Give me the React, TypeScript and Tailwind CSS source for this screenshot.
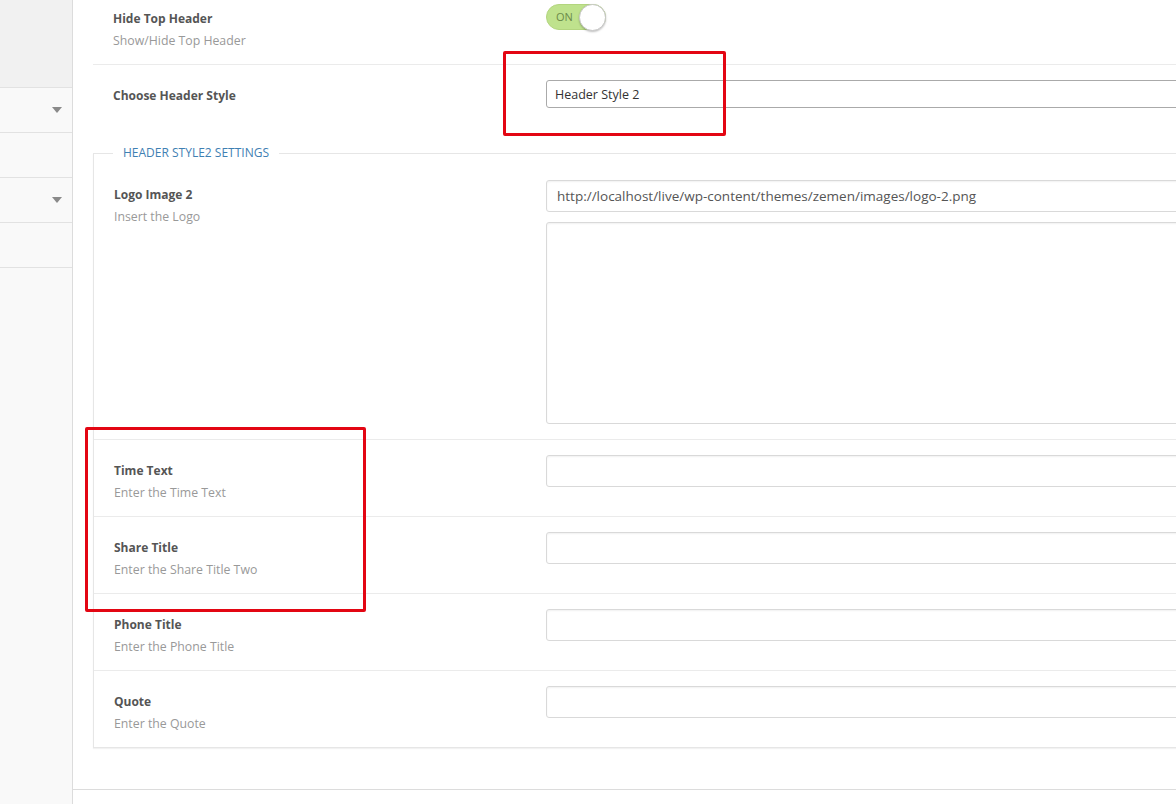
import React from 'react';

const font = { fontFamily: '"Open Sans", "Noto Sans", Arial, sans-serif' };

const SideRow = ({ arrow }: { arrow?: boolean }) => (
  <div className="h-[45px] border-b border-[#e2e2e2] flex items-center justify-end pr-[10px]">
    {arrow && (
      <span className="w-0 h-0 border-l-[5px] border-r-[5px] border-t-[6px] border-l-transparent border-r-transparent border-t-[#8a8a8a]"></span>
    )}
  </div>
);

const Label = ({ title, desc, inner }: { title: string; desc?: string; inner?: boolean }) => (
  <div className={`${inner ? 'w-[452px]' : 'w-[453px]'} shrink-0 pl-[20px]`}>
    <div className="text-[12px] leading-[22px] font-bold text-[#555]">{title}</div>
    {desc && <div className="text-[12.3px] leading-[22px] text-[#999]">{desc}</div>}
  </div>
);

const TextInput = ({ value }: { value?: string }) => (
  <div className="w-[720px] h-[32px] shrink-0 border border-[#d9d9d9] rounded-[3px] bg-white shadow-[inset_0_1px_2px_rgba(0,0,0,0.06)] px-[10px] flex items-center text-[13.5px] text-[#555]">
    {value}
  </div>
);

const FieldRow = ({ title, desc, last }: { title: string; desc: string; last?: boolean }) => (
  <div className={`flex ${last ? 'h-[76px]' : 'h-[77px] border-b border-[#ebebeb]'}`}>
    <div className="pt-[20px]">
      <Label title={title} desc={desc} inner />
    </div>
    <div className="pt-[15px]">
      <TextInput />
    </div>
  </div>
);

export default function App() {
  return (
    <div className="relative w-[1176px] h-[804px] overflow-hidden bg-white flex" style={font}>
      {/* sidebar */}
      <div className="w-[73px] shrink-0 bg-[#f9f9f9] border-r border-[#dcdcdc]">
        <div className="h-[88px] bg-[#f1f1f1] border-b border-[#e2e2e2]"></div>
        <SideRow arrow />
        <SideRow />
        <SideRow arrow />
        <SideRow />
      </div>

      {/* main */}
      <div className="flex-1 min-w-0 flex flex-col">
        <div className="pl-[20px] flex-1">
          {/* hide top header */}
          <div className="h-[65px] flex border-b border-[#ebebeb]">
            <div className="pt-[8px]">
              <Label title="Hide Top Header" desc="Show/Hide Top Header" />
            </div>
            <div className="pt-[4px]">
              <div className="relative w-[60px] h-[26px] rounded-full bg-[#bfe28d] border border-[#b3d57f] flex items-center pl-[9px] text-[11px] text-[#6b8a49]">
                ON
                <span className="absolute right-[-1px] top-[-1px] w-[27px] h-[27px] rounded-full bg-white border border-[#c8c8c8] shadow-[0_1px_2px_rgba(0,0,0,0.25)]"></span>
              </div>
            </div>
          </div>

          {/* header style select */}
          <div className="h-[79px] flex">
            <div className="pt-[20px]">
              <Label title="Choose Header Style" />
            </div>
            <div className="pt-[15px]">
              <div className="w-[720px] h-[28px] border border-[#aaaaaa] rounded-[3px] bg-white px-[8px] pt-[2px] flex items-center text-[12.5px] text-[#333]">
                Header Style 2
              </div>
            </div>
          </div>

          {/* fieldset */}
          <fieldset className="border border-[#e6e6e6] shadow-[0_1px_1px_rgba(0,0,0,0.05)] mr-[-40px]">
            <legend className="ml-[19px] px-[10px] text-[12px] leading-[18px] text-[#3f80b3] uppercase">
              Header Style2 Settings
            </legend>
            <div className="h-[278px] flex border-b border-[#ebebeb]">
              <div className="pt-[22px]">
                <Label title="Logo Image 2" desc="Insert the Logo" inner />
              </div>
              <div className="pt-[18px] flex flex-col gap-[10px]">
                <TextInput value="http://localhost/live/wp-content/themes/zemen/images/logo-2.png" />
                <div className="w-[720px] h-[202px] border border-[#d9d9d9] rounded-[3px] bg-white shadow-[inset_0_1px_2px_rgba(0,0,0,0.06)]"></div>
              </div>
            </div>
            <FieldRow title="Time Text" desc="Enter the Time Text" />
            <FieldRow title="Share Title" desc="Enter the Share Title Two" />
            <FieldRow title="Phone Title" desc="Enter the Phone Title" />
            <FieldRow title="Quote" desc="Enter the Quote" last />
          </fieldset>
        </div>
        <div className="h-[15px] border-t border-[#dcdcdc] shrink-0"></div>
      </div>

      {/* annotation boxes */}
      <div className="absolute left-[503px] top-[51px] w-[223px] h-[85px] border-[3px] border-[#e30613] rounded-[2px]"></div>
      <div className="absolute left-[85px] top-[427px] w-[281px] h-[185px] border-[3px] border-[#e30613] rounded-[2px]"></div>
    </div>
  );
}
